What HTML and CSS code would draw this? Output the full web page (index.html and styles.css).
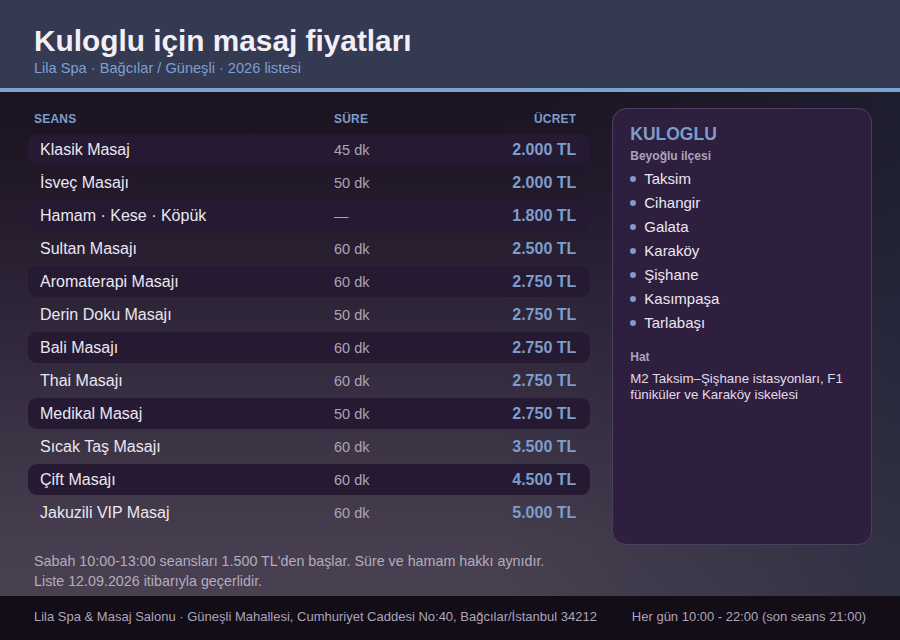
FILE: index.html
```html
<!DOCTYPE html>
<html lang="tr">
<head>
<meta charset="utf-8">
<title>Kuloglu için masaj fiyatları</title>
<link rel="stylesheet" href="styles.css">
</head>
<body>
<div class="page">
  <header class="top">
    <h1 class="title">Kuloglu için masaj fiyatları</h1>
    <div class="subtitle">Lila Spa · Bağcılar / Güneşli · 2026 listesi</div>
  </header>
  <main class="content">
    <section class="prices">
      <div class="thead">
        <span class="c-name">SEANS</span>
        <span class="c-dur">SÜRE</span>
        <span class="c-price">ÜCRET</span>
      </div>
      <div class="rows">
        <div class="row alt"><span class="c-name">Klasik Masaj</span><span class="c-dur">45 dk</span><span class="c-price">2.000 TL</span></div>
        <div class="row"><span class="c-name">İsveç Masajı</span><span class="c-dur">50 dk</span><span class="c-price">2.000 TL</span></div>
        <div class="row alt"><span class="c-name">Hamam · Kese · Köpük</span><span class="c-dur">—</span><span class="c-price">1.800 TL</span></div>
        <div class="row"><span class="c-name">Sultan Masajı</span><span class="c-dur">60 dk</span><span class="c-price">2.500 TL</span></div>
        <div class="row alt"><span class="c-name">Aromaterapi Masajı</span><span class="c-dur">60 dk</span><span class="c-price">2.750 TL</span></div>
        <div class="row"><span class="c-name">Derin Doku Masajı</span><span class="c-dur">50 dk</span><span class="c-price">2.750 TL</span></div>
        <div class="row alt"><span class="c-name">Bali Masajı</span><span class="c-dur">60 dk</span><span class="c-price">2.750 TL</span></div>
        <div class="row"><span class="c-name">Thai Masajı</span><span class="c-dur">60 dk</span><span class="c-price">2.750 TL</span></div>
        <div class="row alt"><span class="c-name">Medikal Masaj</span><span class="c-dur">50 dk</span><span class="c-price">2.750 TL</span></div>
        <div class="row"><span class="c-name">Sıcak Taş Masajı</span><span class="c-dur">60 dk</span><span class="c-price">3.500 TL</span></div>
        <div class="row alt"><span class="c-name">Çift Masajı</span><span class="c-dur">60 dk</span><span class="c-price">4.500 TL</span></div>
        <div class="row"><span class="c-name">Jakuzili VIP Masaj</span><span class="c-dur">60 dk</span><span class="c-price">5.000 TL</span></div>
      </div>
      <div class="notes">
        <p>Sabah 10:00-13:00 seansları 1.500 TL'den başlar. Süre ve hamam hakkı aynıdır.</p>
        <p>Liste 12.09.2026 itibarıyla geçerlidir.</p>
      </div>
    </section>
    <aside class="card">
      <h2 class="card-title">KULOGLU</h2>
      <div class="card-label">Beyoğlu ilçesi</div>
      <ul class="places">
        <li>Taksim</li>
        <li>Cihangir</li>
        <li>Galata</li>
        <li>Karaköy</li>
        <li>Şişhane</li>
        <li>Kasımpaşa</li>
        <li>Tarlabaşı</li>
      </ul>
      <div class="card-label hat">Hat</div>
      <p class="transit">M2 Taksim–Şişhane istasyonları, F1 füniküler ve Karaköy iskelesi</p>
    </aside>
  </main>
  <footer class="foot">
    <span>Lila Spa &amp; Masaj Salonu · Güneşli Mahallesi, Cumhuriyet Caddesi No:40, Bağcılar/İstanbul 34212</span>
    <span>Her gün 10:00 - 22:00 (son seans 21:00)</span>
  </footer>
</div>
</body>
</html>
```
FILE: styles.css
```css
* { box-sizing: border-box; }
html, body { margin: 0; padding: 0; }
body {
  width: 900px;
  height: 640px;
  overflow: hidden;
  font-family: "Liberation Sans", Arial, sans-serif;
  color: #ece6f2;
}
.page {
  width: 900px;
  height: 640px;
  display: flex;
  flex-direction: column;
  background:
    linear-gradient(to right, rgba(30, 38, 58, 0) 55%, rgba(30, 38, 58, 0.55) 100%),
    linear-gradient(to bottom, #170f1c 0%, #1f1626 25%, #33293d 55%, #463e4e 85%, #4a4252 100%);
}
.top {
  height: 92px;
  background: #343a51;
  border-bottom: 4px solid #7ea2cf;
  padding: 23px 34px 0;
}
.title {
  margin: 0;
  font-size: 29.8px;
  line-height: 35px;
  font-weight: bold;
  color: #f3eef8;
}
.subtitle {
  margin-top: 1px;
  font-size: 14.6px;
  line-height: 18px;
  color: #7f9fd0;
}
.content {
  flex: 1;
  display: flex;
  gap: 22px;
  padding: 16px 28px 0 28px;
}
.prices {
  width: 563px;
  display: flex;
  flex-direction: column;
}
.thead {
  display: flex;
  align-items: center;
  height: 20px;
  margin-top: 1px;
  padding: 0 14px 0 6px;
  font-size: 12px;
  font-weight: bold;
  letter-spacing: 0.2px;
  color: #7d9dcc;
  margin-bottom: 5px;
}
.c-name { flex: 0 0 300px; }
.c-dur { flex: 1; }
.c-price { flex: 0 0 120px; text-align: right; }
.rows {
  display: flex;
  flex-direction: column;
  gap: 2px;
}
.row {
  display: flex;
  align-items: center;
  height: 31px;
  padding: 0 14px 0 12px;
  border-radius: 9px;
  font-size: 16px;
}
.row.alt { background: #251a31; }
.row .c-name { flex: 0 0 294px; color: #ece6f2; }
.row .c-dur { font-size: 14.5px; color: #aca4b6; }
.row .c-price { font-weight: bold; color: #7d9dcc; }
.notes {
  margin-top: 23px;
  padding-left: 6px;
  font-size: 14.3px;
  line-height: 20px;
  color: #b4acbf;
}
.notes p { margin: 0; }
.card {
  width: 260px;
  height: 437px;
  background: #2e1f3e;
  border: 1px solid #4c3f62;
  border-radius: 14px;
  padding: 14px 17px;
}
.card-title {
  margin: 0;
  font-size: 17.5px;
  line-height: 22px;
  font-weight: bold;
  color: #7d9dcc;
}
.card-label {
  font-size: 12px;
  line-height: 16px;
  font-weight: bold;
  color: #ada0bd;
  margin-top: 3px;
}
.places {
  list-style: none;
  margin: 2px 0 0;
  padding: 0;
}
.places li {
  display: flex;
  align-items: center;
  height: 24px;
  font-size: 15px;
  color: #ece6f2;
}
.places li::before {
  content: "";
  width: 6px;
  height: 6px;
  border-radius: 50%;
  background: #7d9dcc;
  margin: 2px 8px 0 0;
}
.card-label.hat { margin-top: 15px; }
.transit {
  margin: 6px 0 0;
  font-size: 13.3px;
  line-height: 16px;
  color: #e2dbe9;
}
.foot {
  height: 44px;
  background: #130d18;
  display: flex;
  align-items: center;
  justify-content: space-between;
  padding: 0 34px 3px;
  font-size: 13px;
  color: #ada5b9;
}
```
